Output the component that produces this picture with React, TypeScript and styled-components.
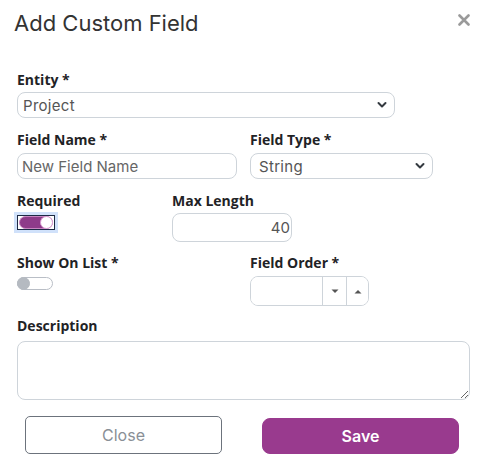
import React, { FC } from 'react';
import styled, { createGlobalStyle } from 'styled-components';

const GlobalStyle = createGlobalStyle`
    body {
        margin: 0;
        background: #ffffff;
        font-family: Inter, "Open Sans", sans-serif;
        color: #212529;
    }
    * { box-sizing: border-box; }
`;

const Modal = styled.div`
    width: 490px;
    height: 459px;
    background: #fff;
`;

const Header = styled.div`
    display: flex;
    justify-content: space-between;
    align-items: flex-start;
    padding: 9px 20px 0 14px;
`;

const Title = styled.h2`
    margin: 0;
    font-size: 22px;
    line-height: 28px;
    font-weight: 400;
    color: #333;
`;

const CloseX = styled.button`
    margin-top: 5px;
    padding: 0;
    border: none;
    background: none;
    width: 12px;
    height: 12px;
    display: flex;
    cursor: pointer;
`;

const Body = styled.div`
    padding: 0 0 0 17px;
`;

const Row = styled.div<{ $top: number }>`
    display: flex;
    margin-top: ${p => p.$top}px;
`;

const Field = styled.div<{ $w: number; $gap?: number }>`
    display: flex;
    flex-direction: column;
    gap: ${p => p.$gap ?? 4}px;
    width: ${p => p.$w}px;
`;

const Label = styled.label`
    font-family: "Open Sans", Inter, sans-serif;
    font-size: 14px;
    line-height: 17px;
    font-weight: 700;
    color: #1f2326;
`;

const SelectWrap = styled.div`
    position: relative;
    width: 100%;
    svg {
        position: absolute;
        right: 8px;
        top: 50%;
        transform: translateY(-50%);
        pointer-events: none;
    }
`;

const Select = styled.select<{ $pad?: number }>`
    appearance: none;
    width: 100%;
    height: 26px;
    border: 1px solid #ced4da;
    border-radius: 8px;
    padding: 0 24px 0 ${p => p.$pad ?? 5}px;
    font-family: inherit;
    font-size: 15px;
    letter-spacing: 0.3px;
    color: #555;
    background: #fff;
    outline: none;
`;

const Input = styled.input<{ $h?: number; $right?: boolean }>`
    width: 100%;
    height: ${p => p.$h ?? 26}px;
    border: 1px solid #ced4da;
    border-radius: 8px;
    padding: ${p => (p.$right ? '0 1px 0 8px' : '0 4px 0 4px')};
    text-align: ${p => (p.$right ? 'right' : 'left')};
    font-family: inherit;
    font-size: 15px;
    color: #555;
    outline: none;
    &::placeholder { color: #666; }
`;

const Switch = styled.button<{ $on: boolean }>`
    position: relative;
    width: ${p => (p.$on ? 38 : 36)}px;
    height: ${p => (p.$on ? 15 : 13)}px;
    margin-top: ${p => (p.$on ? 2 : 1)}px;
    padding: 0;
    border: ${p => (p.$on ? '1px solid #1d2a44' : 'none')};
    background: transparent;
    box-shadow: ${p => (p.$on ? '0 0 0 3px rgba(120, 170, 240, 0.35)' : 'none')};
    cursor: pointer;
    display: flex;
    align-items: center;
    justify-content: center;
`;

const Track = styled.span<{ $on: boolean }>`
    position: relative;
    display: block;
    width: ${p => (p.$on ? 34 : 36)}px;
    height: 13px;
    border-radius: 7px;
    background: ${p => (p.$on ? '#8e3b8a' : '#fff')};
    border: 1px solid ${p => (p.$on ? '#c785c0' : '#b9bec6')};
`;

const Knob = styled.span<{ $on: boolean }>`
    position: absolute;
    top: -1px;
    ${p => (p.$on ? 'right: -1px;' : 'left: -1px;')}
    width: 13px;
    height: 13px;
    border-radius: 50%;
    background: ${p => (p.$on ? '#fff' : '#b5bac1')};
    border: 1px solid ${p => (p.$on ? '#d99bd2' : '#b5bac1')};
`;

const Spinner = styled.div`
    display: flex;
    width: 119px;
    height: 30px;
    border: 1px solid #ced4da;
    border-radius: 8px;
    overflow: hidden;
`;

const SpinInput = styled.input`
    width: 71px;
    border: none;
    outline: none;
    font-family: inherit;
    font-size: 15px;
`;

const SpinButton = styled.button`
    width: 24px;
    border: none;
    border-left: 1px solid #ced4da;
    background: #fff;
    padding: 0;
    display: flex;
    align-items: center;
    justify-content: center;
    cursor: pointer;
    &:last-child { flex: 1; }
`;

const TextArea = styled.textarea`
    width: 453px;
    height: 59px;
    border: 1px solid #ced4da;
    border-radius: 8px;
    font-family: inherit;
    font-size: 15px;
    outline: none;
    resize: both;
`;

const Footer = styled.div`
    display: flex;
    align-items: flex-end;
    gap: 40px;
    margin-top: 16px;
    padding-left: 25px;
`;

const Button = styled.button<{ $primary?: boolean }>`
    width: 197px;
    height: ${p => (p.$primary ? 36 : 38)}px;
    border-radius: ${p => (p.$primary ? 8 : 5)}px;
    border: 1px solid ${p => (p.$primary ? '#993a8e' : '#6c737c')};
    background: ${p => (p.$primary ? '#993a8e' : '#fff')};
    color: ${p => (p.$primary ? '#fff' : '#8a8f96')};
    font-family: inherit;
    font-size: 16px;
    font-weight: ${p => (p.$primary ? 600 : 400)};
    cursor: pointer;
`;

const Chevron: FC = () => (
    <svg width="10" height="7" viewBox="0 0 10 7">
        <path d="M1.5 1.5 L5 5 L8.5 1.5" fill="none" stroke="#343a40" strokeWidth="2" strokeLinecap="round" strokeLinejoin="round" />
    </svg>
);

const Caret: FC<{ up?: boolean }> = ({ up }) => (
    <svg width="8" height="5" viewBox="0 0 8 5">
        <path d={up ? 'M0.5 4.5 L4 1 L7.5 4.5 Z' : 'M0.5 0.5 L7.5 0.5 L4 4 Z'} fill="#555" />
    </svg>
);

export default function App() {
    return (
        <>
            <GlobalStyle />
            <Modal>
                <Header>
                    <Title>Add Custom Field</Title>
                    <CloseX aria-label="close">
                        <svg width="12" height="12" viewBox="0 0 12 12">
                            <path d="M1.5 1.5 L10.5 10.5 M10.5 1.5 L1.5 10.5" stroke="#9a9a9a" strokeWidth="2.6" strokeLinecap="round" />
                        </svg>
                    </CloseX>
                </Header>
                <Body>
                    <Row $top={34}>
                        <Field $w={378}>
                            <Label>Entity *</Label>
                            <SelectWrap>
                                <Select defaultValue="Project">
                                    <option>Project</option>
                                </Select>
                                <Chevron />
                            </SelectWrap>
                        </Field>
                    </Row>
                    <Row $top={13}>
                        <Field $w={233} $gap={5}>
                            <Label>Field Name *</Label>
                            <Input style={{ width: 220 }} placeholder="New Field Name" />
                        </Field>
                        <Field $w={183} $gap={5}>
                            <Label>Field Type *</Label>
                            <SelectWrap>
                                <Select $pad={8} defaultValue="String">
                                    <option>String</option>
                                </Select>
                                <Chevron />
                            </SelectWrap>
                        </Field>
                    </Row>
                    <Row $top={13}>
                        <Field $w={155}>
                            <Label>Required</Label>
                            <Switch $on={true}>
                                <Track $on={true}>
                                    <Knob $on={true} />
                                </Track>
                            </Switch>
                        </Field>
                        <Field $w={120}>
                            <Label>Max Length</Label>
                            <Input $h={29} $right defaultValue="40" />
                        </Field>
                    </Row>
                    <Row $top={12}>
                        <Field $w={233} $gap={5}>
                            <Label>Show On List *</Label>
                            <Switch $on={false}>
                                <Track $on={false}>
                                    <Knob $on={false} />
                                </Track>
                            </Switch>
                        </Field>
                        <Field $w={120} $gap={5}>
                            <Label>Field Order *</Label>
                            <Spinner>
                                <SpinInput />
                                <SpinButton><Caret /></SpinButton>
                                <SpinButton><Caret up /></SpinButton>
                            </Spinner>
                        </Field>
                    </Row>
                    <Row $top={11}>
                        <Field $w={453} $gap={7}>
                            <Label>Description</Label>
                            <TextArea />
                        </Field>
                    </Row>
                </Body>
                <Footer>
                    <Button>Close</Button>
                    <Button $primary>Save</Button>
                </Footer>
            </Modal>
        </>
    );
}
